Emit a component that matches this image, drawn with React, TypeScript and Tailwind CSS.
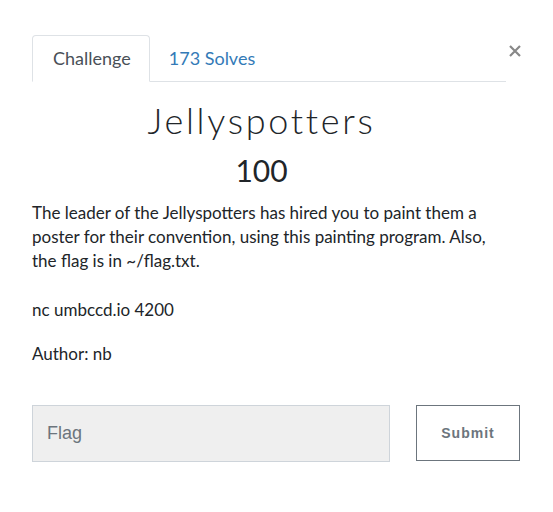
export default function App() {
  return (
    <div className="min-h-[512px] w-[553px] bg-white font-['Lato',sans-serif] text-[#212529]">
      <div className="pl-[32px] pr-[32px] pt-[35px]">
        <div className="flex items-start">
          <nav className="flex flex-1 border-b border-[#dee2e6]">
            <span className="-mb-px rounded-t-[4px] border border-[#dee2e6] border-b-white bg-white pl-[20px] pr-[18px] py-[10px] text-[18px] leading-[24px] text-[#495057]">
              Challenge
            </span>
            <span className="pl-[19px] pr-[19px] py-[11px] text-[18px] leading-[24px] text-[#337ab7]">
              173 Solves
            </span>
          </nav>
          <button className="mt-[8px] flex h-[16px] w-[15px] items-center justify-end">
            <svg width="12" height="12" viewBox="0 0 12 12">
              <path d="M1 1 L11 11 M11 1 L1 11" stroke="#888" strokeWidth="2.2" />
            </svg>
          </button>
        </div>

        <div className="pr-[30px]">
          <h2 className="mt-[16px] text-center text-[36px] font-light leading-[44px] tracking-[2.7px] text-[#212529]">
            Jellyspotters
          </h2>
          <h3 className="mt-[9px] text-center text-[30px] leading-[38px] text-[#212529]">
            100
          </h3>
        </div>

        <div className="mt-[12px] pr-[26px] text-[17px] leading-[24px] text-[#212529]">
          <p className="mb-[25px]">
            The leader of the Jellyspotters has hired you to paint them a poster
            for their convention, using this painting program. Also, the flag is
            in ~/flag.txt.
          </p>
          <p className="mb-[20px]">nc umbccd.io 4200</p>
          <p>Author: nb</p>
        </div>

        <div className="mt-[39px] flex items-start gap-[26px]">
          <input
            className="h-[57px] w-[358px] border border-[#ced4da] bg-[#efefef] px-[14px] font-['Liberation_Sans',sans-serif] text-[18px] text-[#495057] outline-none placeholder:text-[#6c757d]"
            placeholder="Flag"
          />
          <button className="h-[56px] w-[104px] border border-[#6c757d] bg-white font-['Liberation_Sans',sans-serif] text-[14px] font-bold tracking-[1px] text-[#6c757d]">
            Submit
          </button>
        </div>
      </div>
    </div>
  );
}
